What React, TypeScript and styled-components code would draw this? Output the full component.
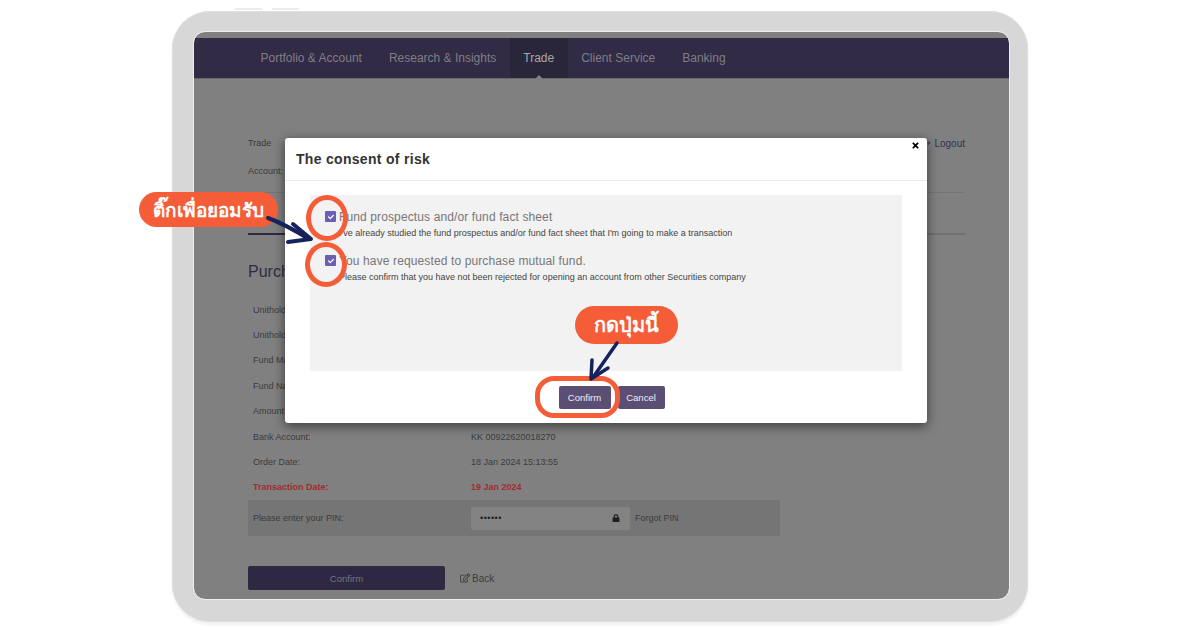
import { createGlobalStyle } from 'styled-components';
import styled from 'styled-components';
import { FaLock, FaRegEdit, FaCheck, FaTimes } from 'react-icons/fa';
import { FiLogOut } from 'react-icons/fi';

const GlobalStyle = createGlobalStyle`
  html, body { margin: 0; padding: 0; background: #fff; }
  body { width: 1200px; height: 630px; overflow: hidden; font-family: "Liberation Sans", Arial, sans-serif; }
`;

const Page = styled.div`
  position: relative;
  width: 1200px;
  height: 630px;
  display: flex;
  justify-content: center;
  padding-top: 11px;
  box-sizing: border-box;
`;

const SideKey = styled.span<{ $left: number }>`
  position: absolute;
  top: 8px;
  left: ${(p) => p.$left}px;
  width: 27px;
  height: 2px;
  background: #ececec;
`;

const Tablet = styled.div`
  width: 856px;
  height: 611px;
  box-sizing: border-box;
  padding: 21px 19px 23px 22px;
  background: #d6d7d6;
  border-radius: 38px;
  box-shadow: 0 3px 3px rgba(0, 0, 0, 0.06), inset 0 0 0 1px #dfdfdf;
`;

const Screen = styled.div`
  position: relative;
  height: 100%;
  padding-top: 6px;
  box-sizing: border-box;
  background: #808080;
  border-radius: 11px;
  overflow: hidden;
  outline: 1px solid #eeeeee;
`;

const Nav = styled.nav`
  height: 41px;
  padding-left: 53px;
  display: flex;
  background: #312b45;
  border-bottom: 1px solid #6a6a6a;
  box-sizing: border-box;
`;

const NavItem = styled.div<{ $active?: boolean }>`
  position: relative;
  display: flex;
  align-items: center;
  padding: 0 13.5px;
  font-size: 12px;
  color: ${(p) => (p.$active ? '#a8a8a8' : '#7f7e85')};
  background: ${(p) => (p.$active ? '#2a2639' : 'transparent')};
  ${(p) =>
    p.$active &&
    `&::after {
      content: '';
      position: absolute;
      left: 50%;
      bottom: -1px;
      margin-left: -4px;
      border: 4px solid transparent;
      border-top: 0;
      border-bottom-color: #808080;
    }`}
`;

const Content = styled.main`
  padding: 58px 44px 0 54px;
  font-size: 9px;
  color: #3a3a3a;
`;

const Crumb = styled.div`
  display: flex;
  justify-content: space-between;
  align-items: center;
  height: 12px;
`;

const Logout = styled.span`
  display: inline-flex;
  align-items: center;
  gap: 3px;
  font-size: 10px;
  color: #332f58;
`;

const AccountLine = styled.div`
  margin-top: 16px;
  height: 12px;
  line-height: 12px;
`;

const Rule = styled.div`
  margin-top: 15px;
  height: 1px;
  background: #757575;
`;

const TabBar = styled.div`
  margin-top: 21px;
  height: 19px;
  border-bottom: 2px solid #717171;
  display: flex;
`;

const ActiveTab = styled.div`
  width: 44px;
  margin-bottom: -2px;
  border-bottom: 2px solid #2e2942;
  color: #2e2942;
  font-size: 10px;
  line-height: 14px;
`;

const Heading = styled.h2`
  margin: 27px 0 15px;
  height: 20px;
  font-size: 16px;
  line-height: 20px;
  font-weight: 400;
  color: #312b45;
`;

const Row = styled.div<{ $alert?: boolean }>`
  display: grid;
  grid-template-columns: 218px 1fr;
  align-items: center;
  height: 25.4px;
  padding-left: 5px;
  color: ${(p) => (p.$alert ? '#a52a2d' : '#3c3c3c')};
  font-weight: ${(p) => (p.$alert ? 700 : 400)};
`;

const PinRow = styled.div`
  display: grid;
  grid-template-columns: 213px 159px 1fr;
  column-gap: 5px;
  align-items: center;
  width: 532px;
  height: 36px;
  margin-top: 0;
  padding-left: 5px;
  box-sizing: border-box;
  background: #757575;
  color: #3c3c3c;
`;

const PinInput = styled.div`
  display: flex;
  justify-content: space-between;
  align-items: center;
  height: 23px;
  padding: 0 10px 0 9px;
  background: #838383;
  border-radius: 2px;
  color: #1f1f1f;
  letter-spacing: 0.5px;
`;

const Actions = styled.div`
  display: flex;
  align-items: center;
  gap: 15px;
  margin-top: 30px;
`;

const PrimaryButton = styled.button`
  width: 197px;
  height: 24px;
  border: 0;
  border-radius: 2px;
  background: #2e2842;
  color: #77757f;
  font: 9.5px "Liberation Sans", Arial, sans-serif;
`;

const BackLink = styled.span`
  display: inline-flex;
  align-items: center;
  gap: 2px;
  font-size: 10px;
  color: #3c3c3c;
`;

const Modal = styled.section`
  position: absolute;
  left: 91px;
  top: 106px;
  width: 642px;
  height: 285px;
  background: #fff;
  border-radius: 3px;
  box-shadow: 0 3px 12px rgba(0, 0, 0, 0.55);
  color: #333;
`;

const ModalHeader = styled.header`
  height: 42px;
  padding-left: 11px;
  display: flex;
  align-items: center;
  border-bottom: 1px solid #ececec;
  font-size: 14px;
  font-weight: 700;
  letter-spacing: 0.3px;
`;

const Close = styled.span`
  position: absolute;
  top: 3px;
  right: 7px;
  display: flex;
  color: #000;
`;

const ConsentPanel = styled.div`
  margin: 14px 25px 0;
  height: 176px;
  padding-top: 16px;
  box-sizing: border-box;
  background: #f2f2f2;
`;

const Consent = styled.div`
  display: grid;
  grid-template-columns: 11px 1fr;
  column-gap: 3px;
  margin: 0 0 16px 15px;
`;

const Check = styled.span`
  display: flex;
  align-items: center;
  justify-content: center;
  width: 11px;
  height: 11px;
  margin-top: 0;
  border-radius: 1px;
  background: #6a5fb0;
  color: #fff;
`;

const ConsentTitle = styled.div`
  font-size: 12px;
  line-height: 12px;
  letter-spacing: 0.12px;
  color: #777;
`;

const ConsentNote = styled.div`
  grid-column: 2;
  margin-top: 5px;
  font-size: 9px;
  line-height: 11px;
  color: #444;
`;

const ModalFooter = styled.footer`
  display: flex;
  justify-content: center;
  gap: 7px;
  margin-top: 15px;
  padding-left: 11px;
`;

const ModalButton = styled.button<{ $width: number }>`
  width: ${(p) => p.$width}px;
  height: 23px;
  padding: 0;
  border: 0;
  border-radius: 2px;
  background: #5a4e75;
  color: #f0eef4;
  font: 9.5px "Liberation Sans", Arial, sans-serif;
`;

const Callout = styled.div<{ $left: number; $top: number; $width: number; $height: number; $size: number }>`
  position: absolute;
  left: ${(p) => p.$left}px;
  top: ${(p) => p.$top}px;
  width: ${(p) => p.$width}px;
  height: ${(p) => p.$height}px;
  display: flex;
  align-items: center;
  justify-content: center;
  border-radius: 20px;
  background: #f45d38;
  color: #fff;
  font-family: "Noto Sans", "DejaVu Sans", sans-serif;
  font-size: ${(p) => p.$size}px;
  font-weight: 700;
  white-space: nowrap;
`;

const Ring = styled.div<{ $left: number; $top: number; $width: number; $height: number; $radius: string }>`
  position: absolute;
  left: ${(p) => p.$left}px;
  top: ${(p) => p.$top}px;
  width: ${(p) => p.$width}px;
  height: ${(p) => p.$height}px;
  box-sizing: border-box;
  border: 5px solid #f45d38;
  border-radius: ${(p) => p.$radius};
`;

const ArrowLayer = styled.svg`
  position: absolute;
  left: 0;
  top: 0;
  pointer-events: none;
`;

const rows = [
  ['Unitholder Name:', ''],
  ['Unitholder No:', ''],
  ['Fund Management:', ''],
  ['Fund Name:', ''],
  ['Amount:', ''],
  ['Bank Account:', 'KK 00922620018270'],
  ['Order Date:', '18 Jan 2024 15:13:55'],
];

const consents = [
  {
    title: 'Fund prospectus and/or fund fact sheet',
    note: "I've already studied the fund prospectus and/or fund fact sheet that I'm going to make a transaction",
  },
  {
    title: 'You have requested to purchase mutual fund.',
    note: 'Please confirm that you have not been rejected for opening an account from other Securities company',
  },
];

export default function App() {
  return (
    <Page>
      <GlobalStyle />
      <SideKey $left={235} />
      <SideKey $left={272} />
      <Tablet>
        <Screen>
          <Nav>
            <NavItem>Portfolio &amp; Account</NavItem>
            <NavItem>Research &amp; Insights</NavItem>
            <NavItem $active>Trade</NavItem>
            <NavItem>Client Service</NavItem>
            <NavItem>Banking</NavItem>
          </Nav>
          <Content>
            <Crumb>
              <span>Trade</span>
              <Logout>
                <FiLogOut size={10} /> Logout
              </Logout>
            </Crumb>
            <AccountLine>Account:</AccountLine>
            <Rule />
            <TabBar>
              <ActiveTab>Enter</ActiveTab>
            </TabBar>
            <Heading>Purchase</Heading>
            {rows.map(([label, value]) => (
              <Row key={label}>
                <span>{label}</span>
                <span>{value}</span>
              </Row>
            ))}
            <Row $alert>
              <span>Transaction Date:</span>
              <span>19 Jan 2024</span>
            </Row>
            <PinRow>
              <span>Please enter your PIN:</span>
              <PinInput>
                <span>••••••</span>
                <FaLock size={8} />
              </PinInput>
              <span>Forgot PIN</span>
            </PinRow>
            <Actions>
              <PrimaryButton>Confirm</PrimaryButton>
              <BackLink>
                <FaRegEdit size={10} /> Back
              </BackLink>
            </Actions>
          </Content>
          <Modal>
            <ModalHeader>The consent of risk</ModalHeader>
            <Close>
              <FaTimes size={9} />
            </Close>
            <ConsentPanel>
              {consents.map((c) => (
                <Consent key={c.title}>
                  <Check>
                    <FaCheck size={6} />
                  </Check>
                  <ConsentTitle>{c.title}</ConsentTitle>
                  <ConsentNote>{c.note}</ConsentNote>
                </Consent>
              ))}
            </ConsentPanel>
            <ModalFooter>
              <ModalButton $width={52}>Confirm</ModalButton>
              <ModalButton $width={47}>Cancel</ModalButton>
            </ModalFooter>
          </Modal>
        </Screen>
      </Tablet>
      <Ring $left={306} $top={195} $width={42} $height={46} $radius="50%" />
      <Ring $left={305} $top={242} $width={42} $height={45} $radius="50%" />
      <Ring $left={535} $top={376} $width={85} $height={42} $radius="19px" />
      <Callout $left={139} $top={192} $width={139} $height={35} $size={19}>
        ติ๊กเพื่อยอมรับ
      </Callout>
      <Callout $left={575} $top={306} $width={103} $height={38} $size={20}>
        กดปุ่มนี้
      </Callout>
      <ArrowLayer width={1200} height={630} viewBox="0 0 1200 630" fill="none" stroke="#16225c" strokeLinecap="round" strokeLinejoin="round">
        <path d="M268 218 C282 223 296 231 309 239" strokeWidth={4} />
        <path d="M293 224 L311 239 L288 242" strokeWidth={4} />
        <path d="M617 343 L594 376" strokeWidth={3.5} />
        <path d="M592 360 L591 379 L608 368" strokeWidth={3.5} />
      </ArrowLayer>
    </Page>
  );
}
